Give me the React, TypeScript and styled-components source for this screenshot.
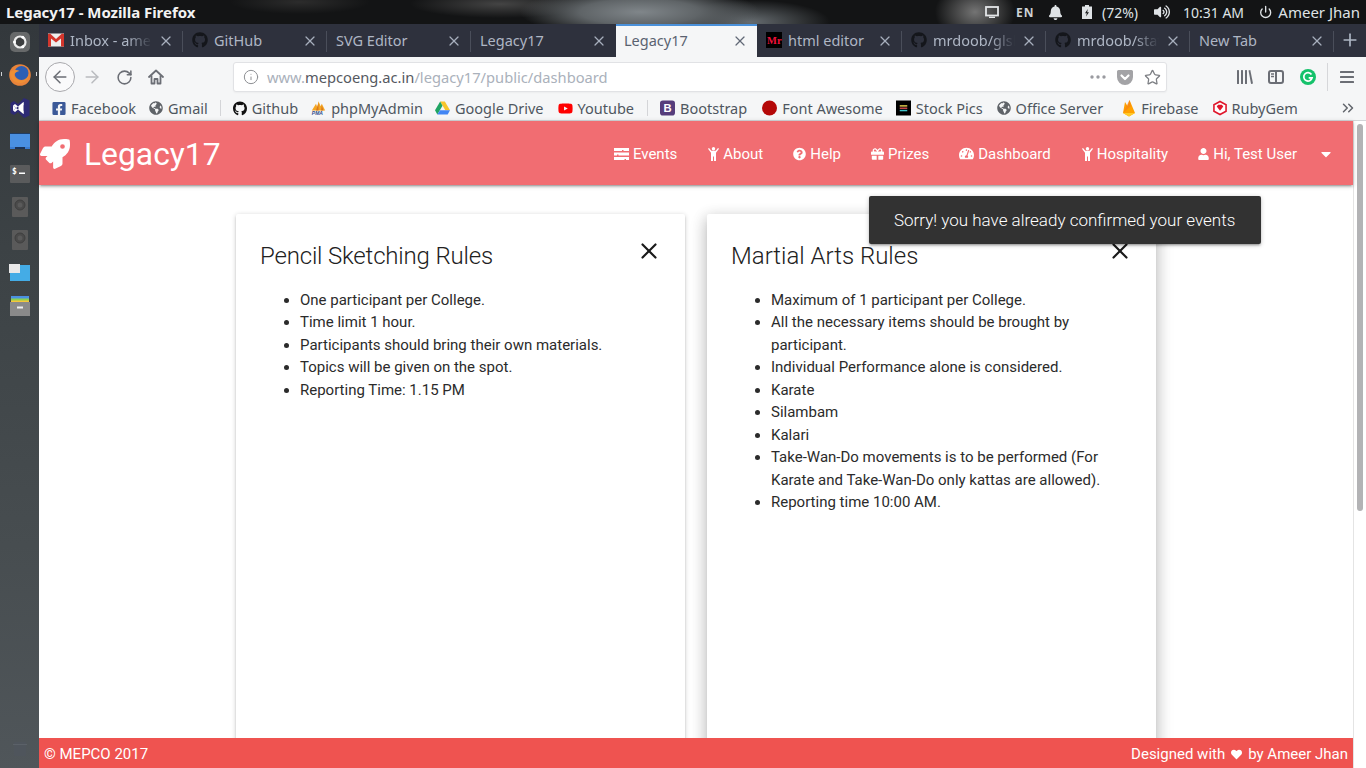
import React from "react";
import styled, { createGlobalStyle } from "styled-components";
import { ArrowLeft, ArrowRight, RotateCw, Info, Star, X, ChevronsRight, Power, Plus } from "lucide-react";
import { FaBell, FaVolumeUp, FaGithub, FaFacebookSquare, FaGlobeAmericas, FaYoutube, FaRocket, FaQuestionCircle, FaGift, FaTachometerAlt, FaUser, FaCaretDown, FaHeart } from "react-icons/fa";

const Global = createGlobalStyle`
  html, body { margin: 0; padding: 0; height: 100%; overflow: hidden; background: #fff; }
  * { box-sizing: border-box; }
`;
const Screen = styled.div`
  width: 1366px; height: 768px; display: flex; flex-direction: column; overflow: hidden;
  font-family: "Noto Sans", sans-serif;
`;
const TopBar = styled.header`
  height: 24px; flex: none; display: flex; align-items: center; justify-content: space-between;
  color: #f2f2f2; padding: 0 6px;
  background:
    radial-gradient(ellipse 120px 26px at 640px 12px, #80868a 0%, #5f6467 50%, transparent 100%),
    radial-gradient(ellipse 80px 22px at 750px 22px, #666c70 0%, transparent 100%),
    radial-gradient(ellipse 40px 30px at 975px 12px, #747474 0%, transparent 100%),
    radial-gradient(ellipse 90px 14px at 500px 4px, #444 0%, transparent 100%),
    radial-gradient(ellipse 70px 12px at 300px 2px, #2c2c2c 0%, transparent 100%),
    #131415;
`;
const WindowTitle = styled.div`font-size: 15px; font-weight: 700; letter-spacing: -0.05px;`;
const Indicators = styled.div`display: flex; align-items: center; font-size: 14px; color: #dfe3e6;`;
const Indicator = styled.span<{ $w: number; $gap?: number }>`
  width: ${(p) => p.$w}px; display: flex; align-items: center; gap: ${(p) => p.$gap ?? 5}px; white-space: nowrap;
`;
const UserName = styled.span`font-size: 15px;`;
const LangTag = styled.span`font-size: 12px; font-weight: 700; letter-spacing: 1px; color: #cdd1d3;`;

const Desk = styled.div`flex: 1; display: flex; min-height: 0;`;
const Launcher = styled.nav`
  width: 39px; flex: none; display: flex; flex-direction: column; align-items: center;
  padding: 1px 0 12px;
  background: linear-gradient(180deg, #33383c 0%, #3c4245 30%, #474d50 70%, #50565a 100%);
`;
const DockItem = styled.div<{ $running?: boolean }>`
  height: 33px; width: 100%; flex: none; display: flex; align-items: center; justify-content: center; position: relative;
  ${(p) =>
    p.$running &&
    `&::before, &::after { content: ""; position: absolute; top: 14px; width: 1px; height: 4px; background: #cfd2d4; }
     &::before { left: 1px; } &::after { right: 2px; }`}
`;
const TrashSlot = styled.div`margin-top: auto; display: flex;`;
const Browser = styled.main`flex: 1; min-width: 0; display: flex; flex-direction: column;`;

const TabStrip = styled.div`height: 33px; flex: none; display: flex; align-items: stretch; background: #2e313d;`;
const Tab = styled.div<{ $w: number; $active?: boolean; $sep?: boolean }>`
  width: ${(p) => p.$w}px; flex: none; position: relative; display: flex; align-items: center;
  padding: 0 9px 3px ${(p) => (p.$active ? 8 : 9)}px; gap: 6px;
  font-size: 14.5px; color: ${(p) => (p.$active ? "#5a6270" : "#aeb6c4")};
  background: ${(p) => (p.$active ? "#f5f6f7" : "transparent")};
  border-top: 2px solid ${(p) => (p.$active ? "#4a90d9" : "transparent")};
  &::after {
    content: ""; display: ${(p) => (p.$sep ? "block" : "none")};
    position: absolute; right: 0; top: 5px; bottom: 5px; width: 1px; background: #4a4e5a;
  }
`;
const TabLabel = styled.span<{ $fade?: boolean }>`
  flex: 1; min-width: 0; white-space: nowrap;
  ${(p) => p.$fade && "mask-image: linear-gradient(90deg, #000 70%, transparent 100%);"}
`;
const TabClose = styled(X)`flex: none; color: inherit; opacity: .95; margin-top: 2px;`;
const PlusBox = styled.div`flex: 1; display: flex; align-items: center; justify-content: center; color: #aeb6c4; padding-bottom: 2px;`;

const Toolbar = styled.div`
  height: 38px; flex: none; background: #f5f6f7; display: flex; align-items: center; padding: 2px 0 0 6px; color: #6b6e75;
`;
const BackCircle = styled.div`
  width: 30px; height: 30px; border-radius: 50%; border: 1px solid #a9a9ad; background: #fafafb;
  display: flex; align-items: center; justify-content: center; flex: none;
`;
const ToolSlot = styled.div<{ $w: number }>`width: ${(p) => p.$w}px; flex: none; display: flex; align-items: center; justify-content: center;`;
const UrlBar = styled.div`
  width: 934px; height: 30px; flex: none; background: #fff; border: 1px solid #e1e2e5; border-radius: 3px;
  display: flex; align-items: center; padding: 0 5px 0 9px; font-size: 14.7px; color: #aab1bb; margin-left: 61px;
  box-shadow: 0 1px 2px rgba(0,0,0,.04);
`;
const UrlText = styled.div`flex: 1; margin-left: 8px; white-space: nowrap;`;
const UrlHost = styled.span`color: #55595f;`;
const UrlIcons = styled.div`display: flex; align-items: center; gap: 11px; color: #9a9ba0;`;
const ToolDivider = styled.div`width: 1px; height: 28px; background: #d6d7da; margin: 0 5px 0 3px;`;

const Bookmarks = styled.div`
  height: 26px; flex: none; background: #f5f6f7; display: flex; align-items: center; padding: 1px 0 0 13px;
  font-size: 14.5px; color: #4f5660; border-bottom: 1px solid #d4d5d8; white-space: nowrap;
`;
const Bookmark = styled.div<{ $gap?: number }>`display: flex; align-items: center; gap: 5px; margin-right: ${(p) => p.$gap ?? 13}px;`;
const BookIcon = styled.span<{ $w: number }>`
  width: ${(p) => p.$w}px; flex: none; display: flex; align-items: center; justify-content: center;
`;
const BookDivider = styled.div`width: 1px; height: 16px; background: #d4d5d8; margin: 0 12px 0 0;`;
const BookEnd = styled.div`margin-left: auto; width: 27px; display: flex; color: #62666c;`;

const Viewport = styled.div`flex: 1; min-height: 0; display: flex; position: relative;`;
const Page = styled.div`
  flex: 1; min-width: 0; display: flex; flex-direction: column; position: relative; background: #fff;
  font-family: Roboto, sans-serif;
`;
const Navbar = styled.div`
  height: 64px; flex: none; background: #f16d72; color: #fff; display: flex; align-items: center;
  box-shadow: 0 2px 2px 0 rgba(0,0,0,.14), 0 3px 1px -2px rgba(0,0,0,.12), 0 1px 5px 0 rgba(0,0,0,.2);
  position: relative; z-index: 2; padding: 1px 19px 0 1px;
`;
const Brand = styled.div`display: flex; align-items: center; gap: 14px; font-size: 31.8px; font-weight: 400; flex: 1;`;
const NavItem = styled.div<{ $gap?: number }>`
  display: flex; align-items: center; gap: 4px; font-size: 15px; margin-left: ${(p) => p.$gap ?? 30}px; white-space: nowrap;
`;
const NavIcon = styled.span<{ $w: number }>`
  width: ${(p) => p.$w}px; flex: none; display: flex; align-items: center; justify-content: center;
`;
const Content = styled.div`
  flex: 1; min-height: 0; overflow: hidden; display: flex; justify-content: center; gap: 22px; padding: 29px 0 0 0;
`;
const Card = styled.section<{ $raised?: boolean }>`
  width: 449px; flex: none; background: #fff; position: relative; border-radius: 2px; padding: 24px; color: #212121;
  height: 700px;
  box-shadow: ${(p) =>
    p.$raised
      ? "0 8px 17px 2px rgba(0,0,0,.14), 0 3px 14px 2px rgba(0,0,0,.12), 0 5px 5px -3px rgba(0,0,0,.2)"
      : "0 2px 2px 0 rgba(0,0,0,.14), 0 3px 1px -2px rgba(0,0,0,.12), 0 1px 5px 0 rgba(0,0,0,.2)"};
`;
const CardTitle = styled.h2<{ $tight?: boolean }>`
  margin: 4px 0 0; font-size: 24px; font-weight: 300; line-height: 28px; color: #212121;
  letter-spacing: ${(p) => (p.$tight ? "-0.18px" : "0")};
`;
const CloseButton = styled.div`position: absolute; top: 24px; right: 23px; display: flex; color: #1a1a1a;`;
const Rules = styled.ul`margin: 18.5px 0 0; padding: 0 0 0 40px; font-size: 15px; line-height: 22.5px; color: #2b2b2b;`;
const Toast = styled.div`
  position: absolute; left: 830px; top: 75px; width: 392px; height: 48px; background: #323232; color: #fff;
  border-radius: 2px; font-size: 17px; font-weight: 300; display: flex; align-items: center; padding: 0 25px; white-space: nowrap; z-index: 5;
  box-shadow: 0 2px 2px 0 rgba(0,0,0,.14), 0 3px 1px -2px rgba(0,0,0,.12), 0 1px 5px 0 rgba(0,0,0,.2);
`;
const Footer = styled.footer`
  height: 30px; flex: none; background: #ef5350; color: #fff; display: flex; align-items: center; justify-content: space-between;
  font-size: 15px; padding: 2px 5px 0; position: relative; z-index: 3;
`;
const FooterRight = styled.div`display: flex; align-items: center; gap: 6px;`;
const ScrollTrack = styled.div`width: 13px; flex: none; background: #fff; border-left: 1px solid #e4e4e4; padding: 3px 3px 0 3px;`;
const ScrollThumb = styled.div`width: 6px; height: 387px; background: #b3b3b5; border-radius: 3px;`;

const Gmail = () => (
  <svg width="16" height="14" viewBox="0 0 16 14"><rect width="16" height="13" y="0.5" fill="#eee" /><path d="M0 1v12.500h3V5.500l5 4 5-4v8h3V1l-2-.5L8 6 2 .5z" fill="#d3352c" /></svg>
);
const MrIcon = () => (
  <svg width="16" height="16" viewBox="0 0 16 16"><rect width="16" height="16" fill="#000" /><text x="1" y="12" fontSize="10.500" fontWeight="700" fontFamily="Liberation Serif, serif" fill="#f0113a">Mr</text></svg>
);
const Pma = () => (
  <svg width="18" height="18" viewBox="0 0 18 18"><path d="M1 12 6 4l1.500 4L9 1l2.500 6L13 4l4 8z" fill="#f5a623" /><path d="M6 12 9 3v9zM12 12l1-6 2 6z" fill="#d9781c" /><text x="1" y="17.500" fontSize="6" fontWeight="700" fontStyle="italic" fontFamily="Liberation Sans, sans-serif" fill="#2d4d8c">PMA</text></svg>
);
const Drive = () => (
  <svg width="16" height="14" viewBox="0 0 16 14"><path d="M5.500 0h5l5.500 9.500h-5z" fill="#f7c52b" /><path d="M5.500 0 0 9.500 2.500 14 8 4.500z" fill="#1fa463" /><path d="M2.500 14h11l2.500-4.500H5.300z" fill="#4285f4" /></svg>
);
const Boot = () => (
  <svg width="16" height="16" viewBox="0 0 16 16"><rect width="16" height="16" rx="3" fill="#563d7c" /><text x="3.600" y="12.500" fontSize="12" fontWeight="700" fontFamily="Liberation Sans, sans-serif" fill="#fff">B</text></svg>
);
const FaDot = () => (
  <svg width="16" height="16" viewBox="0 0 16 16"><circle cx="8" cy="8" r="8" fill="#b40808" /><path d="M14 4a8 8 0 0 1-8 11.700A8 8 0 0 0 14 4z" fill="#8a0505" /></svg>
);
const StockIcon = () => (
  <svg width="16" height="16" viewBox="0 0 16 16"><rect width="16" height="16" fill="#000" /><rect x="4" y="5" width="8" height="1.500" fill="#e8d44d" /><rect x="4" y="7.500" width="8" height="1.500" fill="#d04a4a" /><rect x="4" y="10" width="8" height="1.500" fill="#3fc3c9" /></svg>
);
const Fire = () => (
  <svg width="14" height="17" viewBox="0 0 14 17"><path d="M1 13 3 2l2.500 4L7.500 0 13 13l-6 3.500z" fill="#ffa000" /><path d="M1 13 7.500 0 9 6l-8 7z" fill="#f57f17" opacity=".6" /><path d="M1 13l12 0-6 3.500z" fill="#ffca28" /></svg>
);
const Ruby = () => (
  <svg width="15" height="16" viewBox="0 0 15 16"><path d="M7.500 1 14 4.500v7L7.500 15 1 11.500v-7z" fill="#fff" stroke="#e0162b" strokeWidth="1.700" /><path d="M4 6.300 5.500 4.500h4L11 6.300 7.500 11z" fill="#e0162b" /></svg>
);
const Pocket = () => (
  <svg width="16" height="15" viewBox="0 0 16 15"><path d="M1.500 0h13A1.500 1.500 0 0 1 16 1.500V7A8 8 0 0 1 0 7V1.500A1.500 1.500 0 0 1 1.500 0z" fill="#a3a3a6" /><path d="M4.500 5.500 8 9l3.500-3.500" fill="none" stroke="#fff" strokeWidth="2.200" strokeLinecap="round" strokeLinejoin="round" /></svg>
);
const Library = () => (
  <svg width="16" height="16" viewBox="0 0 16 16" fill="#6b6e75"><rect x="0" y="1" width="2" height="14" rx=".5" /><rect x="4" y="1" width="2" height="14" rx=".5" /><rect x="8" y="1" width="2" height="14" rx=".5" /><path d="M11.500 1.500 13.300 1 16 14.500l-1.900.5z" /></svg>
);
const SidebarIcon = () => (
  <svg width="16" height="14" viewBox="0 0 16 14" fill="none" stroke="#6b6e75"><rect x="1" y="1" width="14" height="12" rx="2" strokeWidth="2" /><path d="M8 1v12" strokeWidth="2" /><path d="M3 4h3M3 6.500h3" strokeWidth="1.300" /></svg>
);
const Grammarly = () => (
  <svg width="16" height="16" viewBox="0 0 16 16"><circle cx="8" cy="8" r="8" fill="#15c26b" /><path d="M11.500 5.500a4.200 4.200 0 1 0 .6 3.300H8.700" fill="none" stroke="#fff" strokeWidth="1.700" /></svg>
);
const Burger = () => (
  <svg width="14" height="12" viewBox="0 0 14 12" fill="#6b6e75"><rect width="14" height="2" rx=".5" /><rect y="5" width="14" height="2" rx=".5" /><rect y="10" width="14" height="2" rx=".5" /></svg>
);
const Dots = () => (
  <svg width="16" height="4" viewBox="0 0 16 4" fill="#9a9ba0"><circle cx="2" cy="2" r="1.700" /><circle cx="8" cy="2" r="1.700" /><circle cx="14" cy="2" r="1.700" /></svg>
);
const Home = () => (
  <svg width="16" height="16" viewBox="0 0 16 16" fill="none" stroke="#6b6e75" strokeWidth="1.800" strokeLinejoin="round"><path d="M1 8 8 1.500 15 8" strokeLinecap="round" /><path d="M3.500 6.500V14.500h3V10h3v4.500h3V6.500" /></svg>
);
const Monitor = () => (
  <svg width="14" height="12" viewBox="0 0 14 12" fill="none" stroke="#e4e6e8" strokeWidth="1.800"><rect x="1" y="1" width="12" height="8.500" /><path d="M4 11.500h6" /></svg>
);
const Battery = () => (
  <svg width="10" height="14" viewBox="0 0 10 14"><path d="M3 0h4v1.500h3V14H0V1.500h3z" fill="#dfe3e6" /><path d="M5.800 4 3 8.200h1.800L4 11.500 7 7.200H5.200z" fill="#1a1b1c" /></svg>
);
const TasksIcon = () => (
  <svg width="15" height="12" viewBox="0 0 15 12" fill="#fff"><path d="M0 0h15v3H9.500v-1H8v1H0zM0 4.500h15v3H4.500v-1H3v1H0zM0 9h15v3h-3v-1h-1.500v1H0z" /></svg>
);
const MaleIcon = () => (
  <svg width="11" height="14" viewBox="0 0 11 14" fill="#fff"><circle cx="5.500" cy="1.700" r="1.700" /><path d="M0 1.800 1 1l2.300 2.800h4.400L10 1l1 .8-3 4V14H6V9.500H5V14H3V5.800z" /></svg>
);
const UbuntuLogo = () => (
  <svg width="20" height="20" viewBox="0 0 20 20"><rect width="20" height="20" rx="5" fill="#67696a" /><circle cx="10" cy="10" r="5.500" fill="#3d3f40" stroke="#ececec" strokeWidth="2.200" /><circle cx="4.500" cy="10" r="1.500" fill="#fff" /><circle cx="12.800" cy="5.300" r="1.500" fill="#fff" /><circle cx="12.800" cy="14.700" r="1.500" fill="#fff" /></svg>
);
const FirefoxLogo = () => (
  <svg width="22" height="22" viewBox="0 0 22 22"><circle cx="11" cy="11" r="10.800" fill="#e8833a" /><circle cx="12.500" cy="9" r="7" fill="#2d5fb5" /><path d="M1 8.500c0 8 7 12 13 10 3-1 6-4 6.500-8.500-1 4-5 7-9 6.500-3.500-.4-6-2.800-6.500-5.500 1-2 3-3.800 5.500-4-3-2-8-1-9.500 1.500z" fill="#ef8f35" /></svg>
);
const VsCode = () => (
  <svg width="20" height="22" viewBox="0 0 20 22"><path d="M14 1 19.500 3.500v15L14 21 8 15l-4 3-3.500-2V6L4 4l4 3z" fill="#2d2a75" /><path d="M13.500 5v12L8 11zM3 8.500 6 11l-3 2.500z" fill="#fff" /><path d="M3 8.500 5 7l8.500 7v3L3 8.500zM3 13.500 5 15l8.500-7V5z" fill="#fff" /></svg>
);
const BlueScreen = () => (
  <svg width="20" height="16" viewBox="0 0 20 16"><rect width="20" height="16" fill="#4a90e2" /><rect y="0" width="20" height="1" fill="#1f3d66" /><rect y="14" width="20" height="2" fill="#3a7bd0" /><rect x="5" y="14" width="10" height="2" fill="#1c3357" /></svg>
);
const TerminalIcon = () => (
  <svg width="20" height="18" viewBox="0 0 20 18"><rect width="20" height="18" rx="1" fill="#5a5b5c" /><text x="2" y="9" fontSize="8" fontWeight="700" fontFamily="DejaVu Sans Mono, monospace" fill="#fff">$</text><rect x="9" y="7.500" width="6" height="1.500" fill="#fff" /></svg>
);
const DiskIcon = () => (
  <svg width="16" height="20" viewBox="0 0 16 20"><rect width="16" height="20" rx="1" fill="#5a5a5a" /><circle cx="8" cy="8" r="5" fill="#4a4a4a" stroke="#3f3f3f" /><circle cx="8" cy="8" r="2.500" fill="#5a5a5a" /></svg>
);
const FilesIcon = () => (
  <svg width="21" height="18" viewBox="0 0 21 18"><rect x="1" y="1" width="20" height="16" fill="#44ace6" /><rect width="11" height="9" fill="#e9e9e9" /></svg>
);
const ArchiveIcon = () => (
  <svg width="20" height="20" viewBox="0 0 20 20"><rect x="1" y="0" width="18" height="3" fill="#4a90e2" /><rect x="1" y="2.500" width="18" height="3" fill="#8bd14f" /><rect x="1" y="4.500" width="18" height="2.500" fill="#f5c63c" /><rect y="6" width="20" height="14" fill="#8a8a8a" /><rect x="7" y="10.500" width="6" height="2" fill="#eee" /></svg>
);
const TrashIcon = () => (
  <svg width="14" height="14" viewBox="0 0 14 14"><rect x="1" y="0" width="12" height="14" rx="1" fill="#4f555c" /><rect x="0" y="2" width="14" height="1" fill="#5b6168" /></svg>
);

type TabData = { w: number; label: string; icon?: React.ReactNode; active?: boolean; sep?: boolean; fade?: boolean };
const gh = <FaGithub size={16} color="#14161b" />;
const tabs: TabData[] = [
  { w: 144, label: "Inbox - amee", icon: <Gmail />, sep: true, fade: true },
  { w: 144, label: "GitHub", icon: gh, sep: true },
  { w: 144, label: "SVG Editor", sep: true },
  { w: 145, label: "Legacy17" },
  { w: 141, label: "Legacy17", active: true },
  { w: 145, label: "html editor", icon: <MrIcon />, sep: true },
  { w: 144, label: "mrdoob/glsl", icon: gh, sep: true, fade: true },
  { w: 144, label: "mrdoob/stat", icon: gh, sep: true, fade: true },
  { w: 144, label: "New Tab", sep: true },
];
const globe = <FaGlobeAmericas size={14} color="#5f6368" />;
const navItems = [
  { label: "Events", w: 15, icon: <TasksIcon />, gap: 0 },
  { label: "About", w: 11, icon: <MaleIcon />, gap: 31 },
  { label: "Help", w: 13, icon: <FaQuestionCircle size={14} /> },
  { label: "Prizes", w: 13, icon: <FaGift size={14} /> },
  { label: "Dashboard", w: 15, icon: <FaTachometerAlt size={15} /> },
  { label: "Hospitality", w: 11, icon: <MaleIcon />, gap: 31 },
  { label: "Hi, Test User", w: 11, icon: <FaUser size={12} /> },
];
const dock = [
  <UbuntuLogo />, <FirefoxLogo />, <VsCode />, <BlueScreen />, <TerminalIcon />,
  <DiskIcon />, <DiskIcon />, <FilesIcon />, <ArchiveIcon />,
];

export default function App() {
  return (
    <Screen>
      <Global />
      <TopBar>
        <WindowTitle>Legacy17 - Mozilla Firefox</WindowTitle>
        <Indicators>
          <Indicator $w={31}><Monitor /></Indicator>
          <Indicator $w={32}><LangTag>EN</LangTag></Indicator>
          <Indicator $w={34}><FaBell size={15} color="#dfe3e6" /></Indicator>
          <Indicator $w={72} $gap={10}><Battery /><span>(72%)</span></Indicator>
          <Indicator $w={29}><FaVolumeUp size={16} color="#dfe3e6" /></Indicator>
          <Indicator $w={76}><span>10:31 AM</span></Indicator>
          <Indicator $w={101} $gap={6}><Power size={14} strokeWidth={2.400} /><UserName>Ameer Jhan</UserName></Indicator>
        </Indicators>
      </TopBar>
      <Desk>
        <Launcher>
          {dock.map((icon, i) => (
            <DockItem key={i} $running={i === 1}>{icon}</DockItem>
          ))}
          <TrashSlot><TrashIcon /></TrashSlot>
        </Launcher>
        <Browser>
          <TabStrip>
            {tabs.map((t, i) => (
              <Tab key={i} $w={t.w} $active={t.active} $sep={t.sep}>
                {t.icon}
                <TabLabel $fade={t.fade}>{t.label}</TabLabel>
                <TabClose size={16} strokeWidth={1.800} />
              </Tab>
            ))}
            <PlusBox><Plus size={20} strokeWidth={2} /></PlusBox>
          </TabStrip>
          <Toolbar>
            <BackCircle><ArrowLeft size={20} strokeWidth={1.800} /></BackCircle>
            <ToolSlot $w={34}><ArrowRight size={20} strokeWidth={1.800} color="#b9bbbf" /></ToolSlot>
            <ToolSlot $w={30}><RotateCw size={17} strokeWidth={2.200} /></ToolSlot>
            <ToolSlot $w={33}><Home /></ToolSlot>
            <UrlBar>
              <Info size={16} strokeWidth={1.500} color="#8e9094" />
              <UrlText>www.<UrlHost>mepcoeng.ac.in</UrlHost>/legacy17/public/dashboard</UrlText>
              <UrlIcons><Dots /><Pocket /><Star size={17} strokeWidth={1.800} color="#7d7f84" /></UrlIcons>
            </UrlBar>
            <ToolSlot $w={66} />
            <ToolSlot $w={24}><Library /></ToolSlot>
            <ToolSlot $w={38}><SidebarIcon /></ToolSlot>
            <ToolSlot $w={26}><Grammarly /></ToolSlot>
            <ToolSlot $w={3} />
            <ToolDivider />
            <ToolSlot $w={28}><Burger /></ToolSlot>
          </Toolbar>
          <Bookmarks>
            <Bookmark $gap={13}><BookIcon $w={14}><FaFacebookSquare size={15} color="#3b5998" /></BookIcon>Facebook</Bookmark>
            <Bookmark $gap={12}><BookIcon $w={14}>{globe}</BookIcon>Gmail</Bookmark>
            <BookDivider />
            <Bookmark $gap={13}><BookIcon $w={14}><FaGithub size={15} color="#111" /></BookIcon>Github</Bookmark>
            <Bookmark $gap={12}><BookIcon $w={15}><Pma /></BookIcon>phpMyAdmin</Bookmark>
            <Bookmark $gap={14}><BookIcon $w={15}><Drive /></BookIcon>Google Drive</Bookmark>
            <Bookmark $gap={13}><BookIcon $w={15}><FaYoutube size={17} color="#f00" /></BookIcon>Youtube</Bookmark>
            <BookDivider />
            <Bookmark $gap={15}><BookIcon $w={15}><Boot /></BookIcon>Bootstrap</Bookmark>
            <Bookmark $gap={13}><BookIcon $w={15}><FaDot /></BookIcon>Font Awesome</Bookmark>
            <Bookmark $gap={14}><BookIcon $w={15}><StockIcon /></BookIcon>Stock Pics</Bookmark>
            <Bookmark $gap={19}><BookIcon $w={14}>{globe}</BookIcon>Office Server</Bookmark>
            <Bookmark $gap={14}><BookIcon $w={14}><Fire /></BookIcon>Firebase</Bookmark>
            <Bookmark><BookIcon $w={14}><Ruby /></BookIcon>RubyGem</Bookmark>
            <BookEnd><ChevronsRight size={18} strokeWidth={2} /></BookEnd>
          </Bookmarks>
          <Viewport>
            <Page>
              <Navbar>
                <Brand><FaRocket size={30} />Legacy17</Brand>
                {navItems.map((n) => (
                  <NavItem key={n.label} $gap={n.gap}><NavIcon $w={n.w}>{n.icon}</NavIcon>{n.label}</NavItem>
                ))}
                <NavItem $gap={21}><FaCaretDown size={16} /></NavItem>
              </Navbar>
              <Content>
                <Card>
                  <CardTitle $tight>Pencil Sketching Rules</CardTitle>
                  <CloseButton><X size={26} strokeWidth={2} /></CloseButton>
                  <Rules>
                    <li>One participant per College.</li>
                    <li>Time limit 1 hour.</li>
                    <li>Participants should bring their own materials.</li>
                    <li>Topics will be given on the spot.</li>
                    <li>Reporting Time: 1.15 PM</li>
                  </Rules>
                </Card>
                <Card $raised>
                  <CardTitle>Martial Arts Rules</CardTitle>
                  <CloseButton><X size={26} strokeWidth={2} /></CloseButton>
                  <Rules>
                    <li>Maximum of 1 participant per College.</li>
                    <li>All the necessary items should be brought by participant.</li>
                    <li>Individual Performance alone is considered.</li>
                    <li>Karate</li>
                    <li>Silambam</li>
                    <li>Kalari</li>
                    <li>Take-Wan-Do movements is to be performed (For Karate and Take-Wan-Do only kattas are allowed).</li>
                    <li>Reporting time 10:00 AM.</li>
                  </Rules>
                </Card>
              </Content>
              <Footer>
                <span>© MEPCO 2017</span>
                <FooterRight>Designed with <FaHeart size={11} /> by Ameer Jhan</FooterRight>
              </Footer>
              <Toast>Sorry! you have already confirmed your events</Toast>
            </Page>
            <ScrollTrack><ScrollThumb /></ScrollTrack>
          </Viewport>
        </Browser>
      </Desk>
    </Screen>
  );
}
